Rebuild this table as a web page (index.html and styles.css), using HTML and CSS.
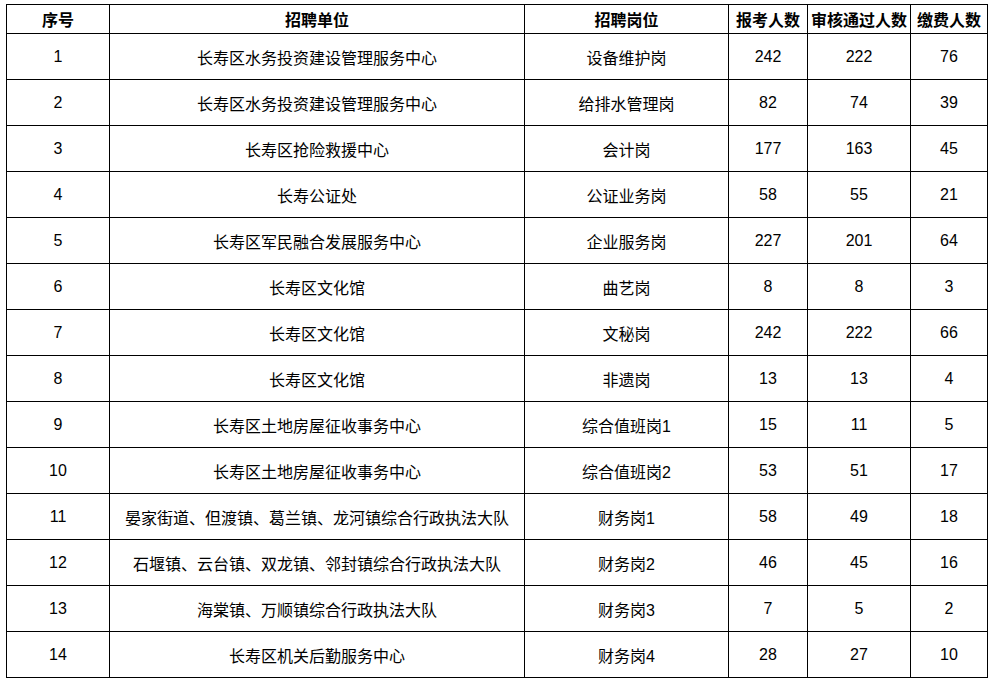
FILE: index.html
```html
<!DOCTYPE html>
<html lang="zh-CN">
<head>
<meta charset="utf-8">
<title>招聘报名统计</title>
<link rel="stylesheet" href="styles.css">
</head>
<body>
<table class="stats">
  <colgroup>
    <col class="c-no">
    <col class="c-unit">
    <col class="c-post">
    <col class="c-apply">
    <col class="c-pass">
    <col class="c-paid">
  </colgroup>
  <thead>
    <tr><th>序号</th><th>招聘单位</th><th>招聘岗位</th><th>报考人数</th><th>审核通过人数</th><th>缴费人数</th></tr>
  </thead>
  <tbody>
    <tr><td>1</td><td>长寿区水务投资建设管理服务中心</td><td>设备维护岗</td><td>242</td><td>222</td><td>76</td></tr>
    <tr><td>2</td><td>长寿区水务投资建设管理服务中心</td><td>给排水管理岗</td><td>82</td><td>74</td><td>39</td></tr>
    <tr><td>3</td><td>长寿区抢险救援中心</td><td>会计岗</td><td>177</td><td>163</td><td>45</td></tr>
    <tr><td>4</td><td>长寿公证处</td><td>公证业务岗</td><td>58</td><td>55</td><td>21</td></tr>
    <tr><td>5</td><td>长寿区军民融合发展服务中心</td><td>企业服务岗</td><td>227</td><td>201</td><td>64</td></tr>
    <tr><td>6</td><td>长寿区文化馆</td><td>曲艺岗</td><td>8</td><td>8</td><td>3</td></tr>
    <tr><td>7</td><td>长寿区文化馆</td><td>文秘岗</td><td>242</td><td>222</td><td>66</td></tr>
    <tr><td>8</td><td>长寿区文化馆</td><td>非遗岗</td><td>13</td><td>13</td><td>4</td></tr>
    <tr><td>9</td><td>长寿区土地房屋征收事务中心</td><td>综合值班岗1</td><td>15</td><td>11</td><td>5</td></tr>
    <tr><td>10</td><td>长寿区土地房屋征收事务中心</td><td>综合值班岗2</td><td>53</td><td>51</td><td>17</td></tr>
    <tr><td>11</td><td>晏家街道、但渡镇、葛兰镇、龙河镇综合行政执法大队</td><td>财务岗1</td><td>58</td><td>49</td><td>18</td></tr>
    <tr><td>12</td><td>石堰镇、云台镇、双龙镇、邻封镇综合行政执法大队</td><td>财务岗2</td><td>46</td><td>45</td><td>16</td></tr>
    <tr><td>13</td><td>海棠镇、万顺镇综合行政执法大队</td><td>财务岗3</td><td>7</td><td>5</td><td>2</td></tr>
    <tr><td>14</td><td>长寿区机关后勤服务中心</td><td>财务岗4</td><td>28</td><td>27</td><td>10</td></tr>
  </tbody>
</table>
</body>
</html>
```
FILE: styles.css
```css
html, body {
  margin: 0;
  padding: 0;
  background: #ffffff;
}
body {
  padding: 4px 0 0 6px;
  font-family: "Liberation Sans", "Noto Sans CJK SC", sans-serif;
  font-size: 16px;
  color: #000000;
}
.stats {
  border-collapse: collapse;
  table-layout: fixed;
  width: 981px;
}
.c-no { width: 103px; }
.c-unit { width: 415px; }
.c-post { width: 204px; }
.c-apply { width: 79px; }
.c-pass { width: 103px; }
.c-paid { width: 77px; }
.stats th,
.stats td {
  border: 1px solid #000000;
  padding: 0;
  text-align: center;
  vertical-align: middle;
  white-space: nowrap;
  overflow: hidden;
}
.stats th {
  height: 28px;
  font-weight: bold;
}
.stats td {
  height: 45px;
  font-weight: normal;
}
```
